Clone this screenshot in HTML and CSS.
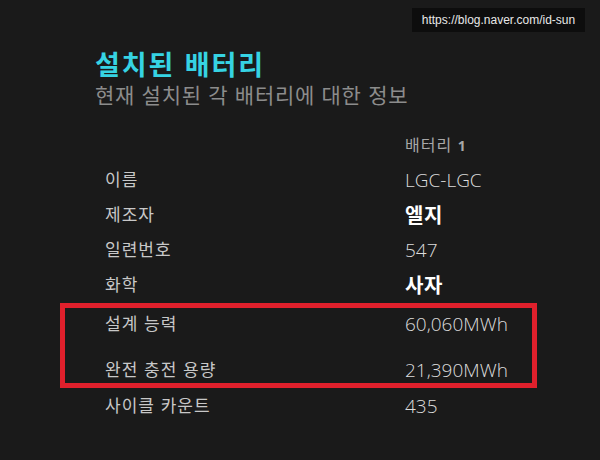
FILE: index.html
```html
<!DOCTYPE html>
<html lang="ko">
<head>
<meta charset="utf-8">
<link rel="stylesheet" href="styles.css">
</head>
<body>
<div class="watermark">https://blog.naver.com/id-sun</div>
<main class="page">
  <header class="head">
    <h1 class="title">설치된 배터리</h1>
    <p class="subtitle">현재 설치된 각 배터리에 대한 정보</p>
  </header>
  <section class="table">
    <div class="row row-head"><span class="label"></span><span class="value head-val">배터리 <b>1</b></span></div>
    <div class="row"><span class="label">이름</span><span class="value latin">LGC-LGC</span></div>
    <div class="row"><span class="label">제조자</span><span class="value strong">엘지</span></div>
    <div class="row"><span class="label">일련번호</span><span class="value latin">547</span></div>
    <div class="row"><span class="label">화학</span><span class="value strong">사자</span></div>
    <div class="highlight">
      <div class="row"><span class="label">설계 능력</span><span class="value latin">60,060MWh</span></div>
      <div class="row"><span class="label">완전 충전 용량</span><span class="value latin">21,390MWh</span></div>
    </div>
    <div class="row row-last"><span class="label">사이클 카운트</span><span class="value latin">435</span></div>
  </section>
</main>
</body>
</html>
```

FILE: styles.css
```css
html, body {
  margin: 0;
  padding: 0;
  background: #1a1a1a;
  width: 600px;
  height: 460px;
  overflow: hidden;
}
body {
  font-family: "Noto Sans CJK KR", "Noto Sans", sans-serif;
  color: #c8c8c8;
  position: relative;
}
.watermark {
  position: absolute;
  top: 8px;
  right: 15px;
  width: 173px;
  height: 24px;
  background: #0d0d0d;
  color: #e8e8e8;
  font-family: "Liberation Sans", Arial, sans-serif;
  font-size: 12px;
  line-height: 24px;
  text-align: center;
}
.page {
  padding-top: 46px;
}
.head {
  padding-left: 95px;
}
.title {
  margin: 0;
  font-size: 27px;
  line-height: 36px;
  font-weight: 700;
  letter-spacing: 1.9px;
  color: #36d3e3;
}
.subtitle {
  margin: 0;
  font-size: 21px;
  line-height: 24px;
  letter-spacing: 0.7px;
  color: #8c8c8c;
}
.table {
  margin-top: 20px;
  margin-left: 60px;
  width: 477px;
}
.row {
  display: flex;
  align-items: center;
  height: 35px;
  padding-left: 45px;
}
.row-last {
  height: 33px;
}
.label {
  width: 300px;
  flex: none;
  font-size: 17px;
  letter-spacing: 1px;
  color: #c8c8c8;
}
.value {
  font-size: 19px;
  color: #dcdcdc;
}
.head-val {
  font-size: 16px;
  letter-spacing: 1px;
  color: #a8a8a8;
}
.head-val b {
  font-family: "Open Sans", "Noto Sans", sans-serif;
  font-weight: 700;
  font-size: 14px;
}
.latin {
  font-family: "Open Sans", "Noto Sans", sans-serif;
  font-weight: 300;
  padding-top: 3px;
}
.strong {
  font-weight: 700;
  font-size: 20px;
  letter-spacing: 0.5px;
  color: #ffffff;
  padding-top: 2px;
}
.highlight {
  margin-top: 2px;
  border: 5px solid #e0202c;
  padding-left: 40px;
  display: flex;
  flex-direction: column;
  gap: 17px;
}
.highlight .row {
  padding-left: 0;
  height: 29px;
}
```
